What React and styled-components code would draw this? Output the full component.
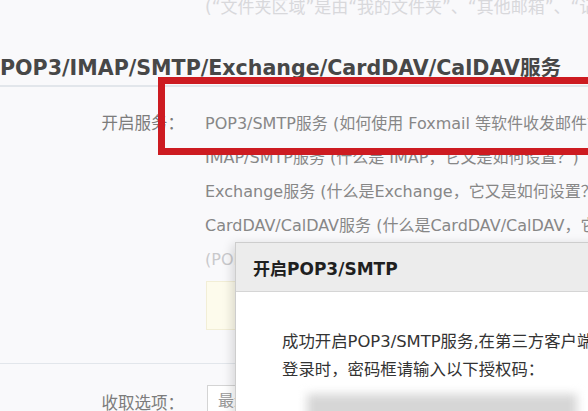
import React from 'react';
import styled, { createGlobalStyle } from 'styled-components';

const GlobalStyle = createGlobalStyle`
  html, body {
    margin: 0;
    padding: 0;
    background: #f9f9fb;
  }
  body {
    font-family: "DejaVu Sans", "Noto Sans CJK SC", sans-serif;
    overflow: hidden;
  }
`;

const Page = styled.div`
  position: relative;
  width: 588px;
  height: 411px;
  overflow: hidden;
  background: #f9f9fb;
`;

const Note = styled.div`
  margin-top: -4px;
  padding-left: 205px;
  font-size: 17px;
  line-height: 22px;
  color: #d8d8db;
  white-space: nowrap;
`;

const SectionTitle = styled.h2`
  margin: 33px 0 0;
  font-size: 20.6px;
  line-height: 34px;
  font-weight: bold;
  color: #474747;
  white-space: nowrap;
`;

const Divider = styled.div`
  height: ${p => p.$thick || 2}px;
  margin-top: ${p => p.$gap || 0}px;
  background: #e2e6eb;
`;

const Form = styled.div`
  display: grid;
  grid-template-columns: 184px 1fr;
  column-gap: 21px;
  grid-auto-rows: minmax(34px, auto);
  padding-top: ${p => p.$top || 0}px;
  font-size: 16px;
  align-items: center;
`;

const Label = styled.div`
  text-align: right;
  font-size: 16.5px;
  color: #7c7c7c;
  white-space: nowrap;
`;

const Option = styled.div`
  color: ${p => (p.$faint ? '#c9c9cc' : '#878787')};
  white-space: nowrap;
`;

const Notice = styled.div`
  align-self: start;
  margin-top: 6px;
  width: 340px;
  height: 49px;
  margin-left: 1px;
  box-sizing: border-box;
  background: #fdfbec;
  border: 1px solid #f2eed6;
`;

const Select = styled.div`
  width: 200px;
  height: 32px;
  margin-left: 2px;
  margin-top: -2px;
  box-sizing: border-box;
  padding-left: 10px;
  background: #fff;
  border: 1px solid #d4d4d4;
  color: #9a9a9a;
  line-height: 30px;
`;

const Highlight = styled.div`
  position: absolute;
  left: 158px;
  top: 77px;
  width: 470px;
  height: 78px;
  box-sizing: border-box;
  border: 7px solid #cd1b21;
`;

const Dialog = styled.div`
  position: absolute;
  left: 235px;
  top: 242px;
  right: -40px;
  bottom: -40px;
  background: #fff;
  border: 1px solid #cdcdcd;
  box-shadow: -3px 2px 10px rgba(0, 0, 0, 0.14);
`;

const DialogHeader = styled.div`
  height: 44px;
  padding: 4px 0 0 17px;
  background: #ececec;
  border-bottom: 1px solid #d5d5d5;
  font-size: 17px;
  font-weight: bold;
  line-height: 44px;
  color: #1f1f1f;
  white-space: nowrap;
`;

const DialogBody = styled.div`
  padding: 36px 0 0 46px;
  font-size: 16.4px;
  line-height: 28px;
  color: #333;
  white-space: nowrap;
`;

const CodeField = styled.div`
  width: 270px;
  height: 34px;
  margin: 10px 0 0 25px;
  background: #d6d6d6;
  filter: blur(5px);
`;

const services = [
  'POP3/SMTP服务 (如何使用 Foxmail 等软件收发邮件？)',
  'IMAP/SMTP服务 (什么是 IMAP，它又是如何设置？)',
  'Exchange服务 (什么是Exchange，它又是如何设置？)',
  'CardDAV/CalDAV服务 (什么是CardDAV/CalDAV，它又是如何设置？)',
];

export default function App() {
  return (
    <Page>
      <GlobalStyle />
      <Note>(“文件夹区域”是由“我的文件夹”、“其他邮箱”、“记事本”、“日历”组成)</Note>
      <SectionTitle>POP3/IMAP/SMTP/Exchange/CardDAV/CalDAV服务</SectionTitle>
      <Divider />
      <Form $top={18}>
        <Label>开启服务：</Label>
        <Option>{services[0]}</Option>
        {services.slice(1).map(s => (
          <React.Fragment key={s}>
            <span />
            <Option>{s}</Option>
          </React.Fragment>
        ))}
        <span />
        <Option $faint>(POP3/IMAP/SMTP/CardDAV/CalDAV服务均支持SSL连接。如何设置？)</Option>
        <span />
        <Notice />
      </Form>
      <Divider $gap={33} $thick={1} />
      <Form $top={21}>
        <Label>收取选项：</Label>
        <Select>最近30天</Select>
      </Form>

      <Highlight />

      <Dialog>
        <DialogHeader>开启POP3/SMTP</DialogHeader>
        <DialogBody>
          <div>成功开启POP3/SMTP服务,在第三方客户端登录时，</div>
          <div>登录时，密码框请输入以下授权码：</div>
          <CodeField />
        </DialogBody>
      </Dialog>
    </Page>
  );
}
